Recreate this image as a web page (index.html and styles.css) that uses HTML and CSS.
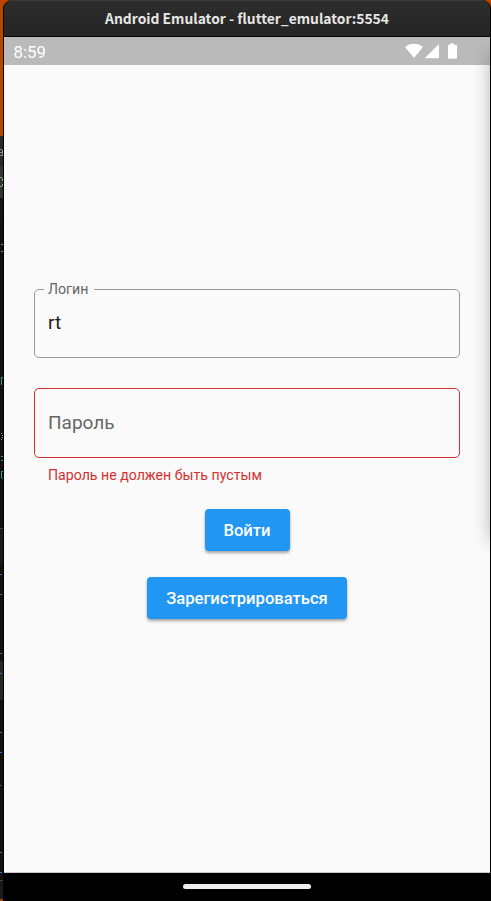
FILE: index.html
```html
<!DOCTYPE html>
<html lang="ru">
<head>
<meta charset="utf-8">
<title>Android Emulator</title>
<link rel="stylesheet" href="styles.css">
</head>
<body>
<div class="desktop">
  <div class="backdrop">
    <svg width="3" height="901" viewBox="0 0 3 901" shape-rendering="crispEdges">
      <rect width="3" height="136" fill="#b94600"/>
      <rect y="136" width="3" height="765" fill="#12110e"/>
      <rect y="136" width="3" height="30" fill="#292927"/>
      <rect y="166" width="3" height="32" fill="#343432"/>
      <rect y="198" width="3" height="25" fill="#17130f"/>
      <rect y="528" width="3" height="1" fill="#444"/>
      <rect y="529" width="3" height="34" fill="#1b1b19"/>
      <rect y="661" width="3" height="39" fill="#242724"/>
      <rect y="880" width="3" height="1" fill="#444"/>
      <rect y="881" width="3" height="18" fill="#1b1b1b"/>
      <rect y="899" width="3" height="2" fill="#a64612"/>
      <path d="M1 244.500h2M1 251.500h2" stroke="#b77c68"/>
      <path d="M0 574.500h2M0 594.500h2M0 653.500h2M0 673.500h2M0 732.500h2M0 752.500h2M0 785.500h1M0 852.500h2M0 872.500h2" stroke="#287bd0"/>
      <path d="M1 456.500h2M1 460.500h2" stroke="#33907c"/>
      <path d="M0 149.500h2M0 152.500h2M0 155.500h3M2.500 150v6" stroke="#8c8c8a"/>
      <path d="M0 177.500h2M2.500 178v3M2.500 184v2M0 186.500h2" stroke="#70b56c"/>
      <path d="M1.500 377v8M2 377.500h1M1.500 471v7M2 471.500h1M2 478.500h1" stroke="#35a084"/>
      <path d="M1 433.500h1M2 435.500h1M2 437.500h1M1 439.500h1" stroke="#999"/>
    </svg>
  </div>
  <div class="window">
    <header class="titlebar"><span class="title">Android Emulator - flutter_emulator:5554</span></header>
    <main class="screen">
      <div class="status">
        <span class="clock">8:59</span>
        <svg class="status-icons" width="54" height="18" viewBox="0 0 54 18" fill="#fff">
          <path d="M0 5C5 .5 13 .5 18 5L9 16Z"/>
          <path d="M34 2V16.200H19.700Z"/>
          <path d="M45.300 1.300h3.400v1.500h2.300q1 0 1 1v12q0 1-1 1h-7q-1 0-1-1v-12q0-1 1-1h1.300z"/>
        </svg>
      </div>
      <form class="form">
        <fieldset class="field">
          <legend>Логин</legend>
          <span class="value">rt</span>
        </fieldset>
        <div class="field invalid"><span class="value">Пароль</span></div>
        <p class="error">Пароль не должен быть пустым</p>
        <button type="button" class="login">Войти</button>
        <button type="button" class="register">Зарегистрироваться</button>
      </form>
      <div class="edge-shade"></div>
    </main>
    <footer class="navbar"><span class="handle"></span></footer>
  </div>
</div>
</body>
</html>
```
FILE: styles.css
```css
* { box-sizing: border-box; }
body { margin: 0; overflow: hidden; font-family: Roboto, sans-serif; }
.desktop {
  width: 491px; height: 901px; display: flex;
  background: linear-gradient(#b94600 136px, #12110e 136px);
}
.backdrop { width: 3px; height: 901px; overflow: hidden; flex: none; }
.backdrop svg { display: block; }
.window {
  width: 488px; height: 901px; flex: none; display: flex; flex-direction: column;
  border-left: 1px solid #000; border-right: 1px solid #000;
  border-radius: 9px 9px 0 0; overflow: hidden; background: #000;
}
.titlebar {
  height: 37px; flex: none; display: flex; align-items: center; justify-content: center;
  padding-bottom: 2px;
  background: linear-gradient(#2d2d2d, #252525);
  border-top: 1px solid #3b3b3b; border-bottom: 1px solid #050505;
}
.title {
  color: #e6e6e4; font: bold 13.870px/20px "Noto Sans CJK SC", sans-serif; white-space: nowrap;
}
.screen { position: relative; height: 836px; flex: none; background: #fafafa; border-bottom: 1px solid #c8c8c8; overflow: hidden; }
.status {
  height: 28px; padding: 0 31px 0 9.500px; display: flex; justify-content: space-between;
  background: #bababa; color: #fff;
}
.clock { font-size: 16.800px; line-height: 30px; }
.status-icons { margin-top: 5px; }
.form { padding: 217px 30px 0; display: flex; flex-direction: column; align-items: center; }
.field {
  width: 426px; height: 76px; margin: 0; padding: 0 13px; min-width: 0;
  border: 1px solid #999; border-radius: 5px;
}
.field legend {
  margin-left: -4px; padding: 0 6px 0 4px; font-size: 14.150px; line-height: 14px; height: 14px; color: #666;
}
.value { display: block; font-size: 19px; line-height: 24px; color: #212121; }
fieldset .value { margin-top: 15px; }
.invalid {
  height: 70px; margin-top: 30px; border-color: #d32f2f; display: flex; align-items: center;
}
.invalid .value { color: #666; }
.error { align-self: flex-start; margin: 7px 0 0 14px; font-size: 14.150px; line-height: 21px; color: #d32f2f; }
button {
  height: 42px; padding: 1px 0 0; border: 0; border-radius: 4px; background: #2196f3; color: #fff;
  font: 500 16.600px/41px Roboto, sans-serif; box-shadow: 0 2px 3px rgba(0, 0, 0, .35);
}
.login { width: 85px; margin-top: 23px; }
.register { width: 200px; margin-top: 26px; }
.edge-shade {
  position: absolute; left: 487px; top: 18px; width: 20px; height: 486px;
  box-shadow: 0 0 18px rgba(0, 0, 0, .3);
}
.navbar { height: 28px; flex: none; display: flex; justify-content: center; padding-top: 11px; }
.handle { width: 128px; height: 5px; border-radius: 3px; background: #eee; }
```
